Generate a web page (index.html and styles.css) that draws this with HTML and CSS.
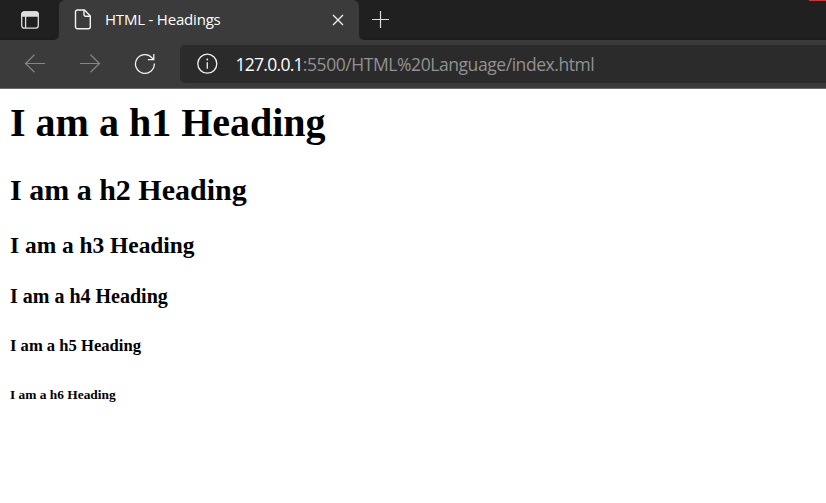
FILE: index.html
```html
<!DOCTYPE html>
<html lang="en">
<head>
<meta charset="utf-8">
<title>HTML - Headings</title>
<link rel="stylesheet" href="styles.css">
</head>
<body>
<header class="browser">
  <div class="tabstrip">
    <div class="tab-actions">
      <svg width="20" height="20" viewBox="0 0 20 20" fill="none" stroke="#dedede" stroke-width="1.3"><rect x="1.7" y="2" width="16.6" height="16.2" rx="2.6"/><path d="M2 4.3Q2 2 4.3 2h11.4Q18 2 18 4.3V6H2z" fill="#dedede"/><path d="M5.6 6v12"/></svg>
    </div>
    <div class="tab-slot">
      <div class="tab">
        <svg class="page-icon" width="18" height="22" viewBox="0 0 18 22" fill="none" stroke="#f2f2f2" stroke-width="1.4" stroke-linejoin="round"><path d="M3.5 1h7l5.800 6v10.800a2 2 0 0 1-2 2H3.500a2 2 0 0 1-2-2V3a2 2 0 0 1 2-2z"/><path d="M10 1.200v4.500a1.500 1.500 0 0 0 1.500 1.500h4.500"/></svg>
        <span class="tab-title">HTML - Headings</span>
        <svg class="close" width="12" height="12" viewBox="0 0 12 12" stroke="#f2f2f2" stroke-width="1.25"><path d="M1 1l10 10M11 1L1 11"/></svg>
      </div>
    </div>
    <div class="strip-rest">
      <svg width="18" height="18" viewBox="0 0 18 18" stroke="#dedede" stroke-width="1.2"><path d="M8.500 0v17M0 8.500h17"/></svg>
      <span class="window-edge"></span>
    </div>
  </div>
  <div class="toolbar">
    <svg class="nav" width="22" height="20" viewBox="0 0 22 20" fill="none" stroke="#858585" stroke-width="1.2"><path d="M21 9.500H1.500M10.500 .700L1.500 9.500l9 8.800"/></svg>
    <svg class="nav" width="22" height="20" viewBox="0 0 22 20" fill="none" stroke="#858585" stroke-width="1.2"><path d="M1 9.500h19.500M11.500 .700L20.500 9.500l-9 8.800"/></svg>
    <svg class="reload" width="22" height="22" viewBox="0 0 22 22" fill="none" stroke="#f2f2f2" stroke-width="1.3"><path d="M20.300 10.500A9.400 9.400 0 1 1 17.900 4.700L19.700 6.600M19.800 1v5.700h-5.900"/></svg>
    <div class="address">
      <svg width="22" height="22" viewBox="0 0 22 22" fill="none" stroke="#f2f2f2" stroke-width="1.300"><circle cx="11.300" cy="10.700" r="9.500"/><path d="M11.300 9.200v6.500"/><circle cx="11.300" cy="6.500" r=".9" fill="#f2f2f2" stroke="none"/></svg>
      <span class="url"><b>127.0.0.1</b>:5500/HTML%20Language/index.html</span>
    </div>
  </div>
</header>
<main>
  <h1>I am a h1 Heading</h1>
  <h2>I am a h2 Heading</h2>
  <h3>I am a h3 Heading</h3>
  <h4>I am a h4 Heading</h4>
  <h5>I am a h5 Heading</h5>
  <h6>I am a h6 Heading</h6>
</main>
</body>
</html>
```
FILE: styles.css
```css
* { box-sizing: border-box; }
body { margin: 0; background: #fff; color: #000; overflow: hidden; }
svg { display: block; flex: none; }

.browser { height: 89px; background: #3b3b3b; border-bottom: 1px solid #6b6b6b; font-family: "Open Sans", sans-serif; }
.tabstrip { display: flex; height: 40px; }
.tab-actions { width: 59px; padding: 10px 0 0 20px; background: linear-gradient(#202020 37px, #1b1b1b); border-bottom-right-radius: 5px; }
.tab-slot { width: 300px; background: linear-gradient(#202020 8px, #3b3b3b 8px); }
.tab { display: flex; align-items: center; height: 40px; padding: 0 15px; background: #3b3b3b; border-radius: 6px 6px 0 0; }
.tab-title { margin: -2px 0 0 13px; color: #fff; font-size: 15px; line-height: 20px; letter-spacing: -0.2px; white-space: nowrap; }
.close { margin-left: auto; }
.strip-rest { display: flex; flex: 1; align-items: flex-start; justify-content: space-between; background: linear-gradient(#202020 37px, #1b1b1b); border-bottom-left-radius: 5px; }
.strip-rest svg { margin: 11px 0 0 13px; }
.window-edge { width: 17px; height: 1px; background: #d13438; }

.toolbar { display: flex; align-items: center; height: 48px; padding-left: 24px; }
.nav { margin-right: 33px; }
.reload { margin-right: 24px; }
.address { display: flex; align-items: center; flex: 1; height: 38px; padding-left: 16px; background: #2b2b2b; border-radius: 5px 0 0 5px; }
.url { margin-left: 17.5px; color: #929292; font-size: 17.5px; line-height: 24px; letter-spacing: -0.43px; white-space: nowrap; }
.url b { color: #fff; font-weight: 400; letter-spacing: -0.72px; }

main { padding: 11px 10px 0; font-family: "Liberation Serif", serif; }
h1, h2, h3, h4, h5, h6 { margin: 0; font-weight: 700; white-space: nowrap; }
h1 { font-size: 40px; line-height: 46px; margin-bottom: 27px; }
h2 { font-size: 30px; line-height: 34px; margin-bottom: 25px; }
h3 { font-size: 23.4px; line-height: 27px; margin-bottom: 26px; }
h4 { font-size: 20px; line-height: 22px; margin-bottom: 29px; }
h5 { font-size: 16.6px; line-height: 19px; margin-bottom: 32px; }
h6 { font-size: 13.4px; line-height: 16px; }
```
